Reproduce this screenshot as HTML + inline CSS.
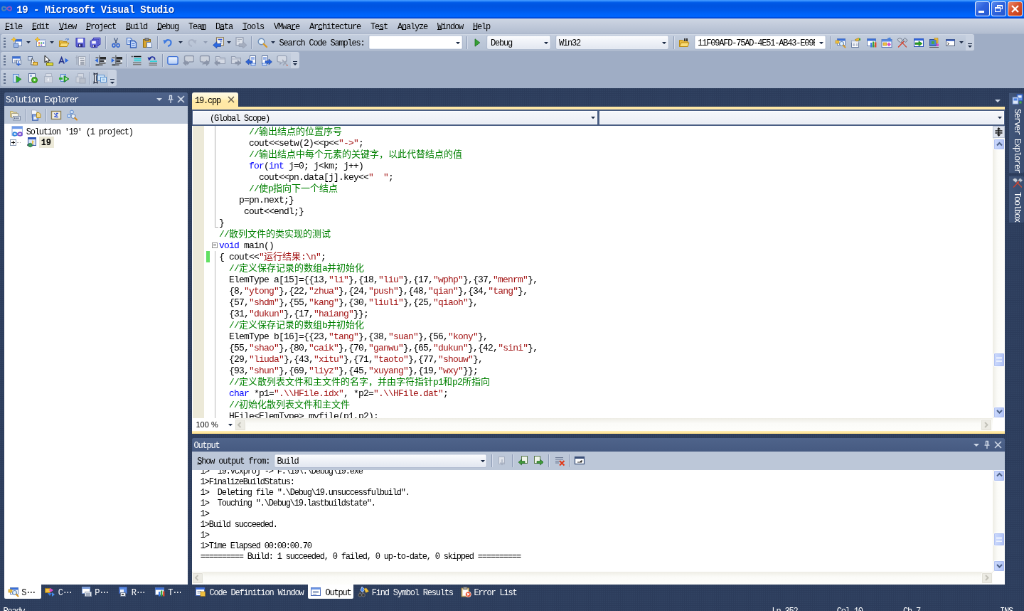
<!DOCTYPE html><html><head><meta charset="utf-8"><title>19 - Microsoft Visual Studio</title><style>
html,body{margin:0;padding:0;}
body{width:1024px;height:611px;overflow:hidden;background:#2c3c5b;position:relative;}
#root{position:absolute;left:0;top:0;width:1440px;height:864px;background-image:radial-gradient(circle at 1px 1px,#324464 0.6px,transparent 1px);background-size:3px 3px;transform:scale(0.7111111);transform-origin:0 0;overflow:hidden;background-color:#2c3c5b;will-change:transform;}
#root div,#root svg{position:absolute;box-sizing:border-box;}
#root span{position:static;}
.u{font-family:"Liberation Mono","Noto Sans CJK SC",monospace;font-size:12px;letter-spacing:-1.2px;white-space:pre;color:#000;}
.w{color:#fff;}
.k{font-family:"Liberation Mono","Noto Sans CJK SC",monospace;font-size:13px;letter-spacing:-0.8px;white-space:pre;color:#000;}
.k .c{font-size:13px;letter-spacing:0;line-height:0;}
.u .c{font-size:12px;letter-spacing:0;line-height:0;}
.g{color:#008000;}.b{color:#0000ff;}.r{color:#a31515;}
.tt{font-family:"Liberation Mono",monospace;font-weight:bold;font-size:14px;letter-spacing:-0.5px;white-space:pre;color:#fff;text-shadow:1px 1px 0 rgba(0,30,120,.75);}
.sans{font-family:"Liberation Sans",sans-serif;font-size:11px;white-space:pre;color:#000;}
u{text-decoration:underline;text-underline-offset:0.3px;text-decoration-thickness:1px;}
</style></head><body><div id="root">
<div style="left:0px;top:0px;width:1440px;height:25.8px;background:linear-gradient(to bottom,#3f97ff 0%,#3a92fc 5%,#0c6af0 10%,#0059e6 15%,#0054e0 32%,#0058e8 52%,#0063f8 75%,#0066ff 90%,#0050e2 94%,#003cc8 100%);"></div>
<svg style="left:1.3px;top:6.3px;" width="17" height="12" viewBox="0 0 17 12"><path d="M8.5 6C6 2.5 2 2.5 2 6C2 9.5 6 9.5 8.5 6" fill="none" stroke="#4f86b4" stroke-width="2"/><path d="M8.5 6C11 9.5 15 9.5 15 6C15 2.5 11 2.5 8.5 6" fill="none" stroke="#8a55c0" stroke-width="2"/></svg>
<div class="tt" style="left:23.3px;top:4.6px;height:18px;line-height:18px;">19 - Microsoft Visual Studio</div>
<div style="left:1371px;top:1.6px;width:21px;height:21px;background:linear-gradient(135deg,#5a8cf0 0%,#2f63dd 45%,#2458d2 100%);border:1px solid rgba(255,255,255,.88);border-radius:3px;"><div style="left:4px;top:12px;width:8px;height:3px;background:#fff"></div></div>
<div style="left:1394px;top:1.6px;width:21px;height:21px;background:linear-gradient(135deg,#5a8cf0 0%,#2f63dd 45%,#2458d2 100%);border:1px solid rgba(255,255,255,.88);border-radius:3px;"><div style="left:7px;top:4px;width:7.5px;height:6.5px;border:1.3px solid #fff;border-top-width:2.2px"></div><div style="left:4px;top:7.5px;width:7.5px;height:6.5px;border:1.3px solid #fff;border-top-width:2.2px;background:#2f63dd"></div></div>
<div style="left:1417px;top:1.6px;width:21px;height:21px;background:linear-gradient(135deg,#ea8a6c 0%,#d7532e 45%,#c23a14 100%);border:1px solid rgba(255,255,255,.88);border-radius:3px;"><svg style="left:3px;top:3px" width="13" height="13" viewBox="0 0 13 13"><path d="M2 2L11 11M11 2L2 11" stroke="#fff" stroke-width="2.2"/></svg></div>
<div style="left:0px;top:25.8px;width:1440px;height:21.9px;background:linear-gradient(to bottom,#d3d9e6 0%,#cbd3e1 10%,#b3bed1 92%,#a9b4c9 100%);"></div>
<div class="u" style="left:7px;top:30.4px;height:16px;line-height:16px;"><u>F</u>ile</div>
<div class="u" style="left:45px;top:30.4px;height:16px;line-height:16px;"><u>E</u>dit</div>
<div class="u" style="left:83px;top:30.4px;height:16px;line-height:16px;"><u>V</u>iew</div>
<div class="u" style="left:121px;top:30.4px;height:16px;line-height:16px;"><u>P</u>roject</div>
<div class="u" style="left:177px;top:30.4px;height:16px;line-height:16px;"><u>B</u>uild</div>
<div class="u" style="left:221px;top:30.4px;height:16px;line-height:16px;"><u>D</u>ebug</div>
<div class="u" style="left:265px;top:30.4px;height:16px;line-height:16px;">Tea<u>m</u></div>
<div class="u" style="left:303px;top:30.4px;height:16px;line-height:16px;">D<u>a</u>ta</div>
<div class="u" style="left:341px;top:30.4px;height:16px;line-height:16px;"><u>T</u>ools</div>
<div class="u" style="left:385px;top:30.4px;height:16px;line-height:16px;">VMwa<u>r</u>e</div>
<div class="u" style="left:435px;top:30.4px;height:16px;line-height:16px;">Ar<u>c</u>hitecture</div>
<div class="u" style="left:521px;top:30.4px;height:16px;line-height:16px;">Te<u>s</u>t</div>
<div class="u" style="left:559px;top:30.4px;height:16px;line-height:16px;">A<u>n</u>alyze</div>
<div class="u" style="left:615px;top:30.4px;height:16px;line-height:16px;"><u>W</u>indow</div>
<div class="u" style="left:665px;top:30.4px;height:16px;line-height:16px;"><u>H</u>elp</div>
<div style="left:0px;top:47.7px;width:1440px;height:76.3px;background:#9fadc5;"></div>
<div style="left:1.4px;top:47.8px;width:1368.5px;height:24px;background:linear-gradient(to bottom,#c4cede 0%,#bcc7d8 50%,#b5c1d4 100%);border-radius:3px;border-top:1px solid #cfd7e4;border-bottom:1px solid #a9b5ca;"></div><div style="left:5.4px;top:52.8px;width:2.6px;height:2.2px;background:#62728f;"></div><div style="left:5.4px;top:56.9px;width:2.6px;height:2.2px;background:#62728f;"></div><div style="left:5.4px;top:61px;width:2.6px;height:2.2px;background:#62728f;"></div><div style="left:5.4px;top:65.1px;width:2.6px;height:2.2px;background:#62728f;"></div>
<div style="left:1.4px;top:72.9px;width:419.3px;height:24px;background:linear-gradient(to bottom,#c4cede 0%,#bcc7d8 50%,#b5c1d4 100%);border-radius:3px;border-top:1px solid #cfd7e4;border-bottom:1px solid #a9b5ca;"></div><div style="left:5.4px;top:77.9px;width:2.6px;height:2.2px;background:#62728f;"></div><div style="left:5.4px;top:82px;width:2.6px;height:2.2px;background:#62728f;"></div><div style="left:5.4px;top:86.1px;width:2.6px;height:2.2px;background:#62728f;"></div><div style="left:5.4px;top:90.2px;width:2.6px;height:2.2px;background:#62728f;"></div>
<div style="left:1.4px;top:98.2px;width:163px;height:24px;background:linear-gradient(to bottom,#c4cede 0%,#bcc7d8 50%,#b5c1d4 100%);border-radius:3px;border-top:1px solid #cfd7e4;border-bottom:1px solid #a9b5ca;"></div><div style="left:5.4px;top:103.2px;width:2.6px;height:2.2px;background:#62728f;"></div><div style="left:5.4px;top:107.3px;width:2.6px;height:2.2px;background:#62728f;"></div><div style="left:5.4px;top:111.4px;width:2.6px;height:2.2px;background:#62728f;"></div><div style="left:5.4px;top:115.5px;width:2.6px;height:2.2px;background:#62728f;"></div>
<svg style="left:16px;top:51.5px;" width="16" height="16" viewBox="0 0 16 16"><rect x="5.5" y="3.5" width="9" height="9" fill="#fff" stroke="#6d86b5" stroke-width="1"/><rect x="5.5" y="3.5" width="9" height="3" fill="#3b6fd6"/><rect x="3.5" y="9" width="6" height="5.5" fill="#9db8e8" stroke="#5878b0"/><path d="M3.5 0L4.5 2.5L7 3.5L4.5 4.5L3.5 7L2.5 4.5L0 3.5L2.5 2.5Z" fill="#f5c52c" stroke="#d99a0a" stroke-width=".5"/></svg>
<svg style="left:48.5px;top:51.5px;" width="16" height="16" viewBox="0 0 16 16"><rect x="2.5" y="3.5" width="12" height="10" fill="#fff" stroke="#7f93b8"/><rect x="2.5" y="3.5" width="12" height="2.5" fill="#c9d6ee"/><rect x="5" y="7.5" width="2" height="2" fill="#e0462c"/><rect x="8.2" y="7.5" width="2" height="2" fill="#2f9e3b"/><rect x="11.2" y="7.5" width="2" height="2" fill="#2e62d8"/><rect x="5" y="10.5" width="2" height="2" fill="#eab41c"/><rect x="8.2" y="10.5" width="2" height="2" fill="#8a4fc9"/><path d="M3.5 0L4.5 2.5L7 3.5L4.5 4.5L3.5 7L2.5 4.5L0 3.5L2.5 2.5Z" fill="#f5c52c" stroke="#d99a0a" stroke-width=".5"/></svg>
<svg style="left:82px;top:51.5px;" width="16" height="16" viewBox="0 0 16 16"><path d="M1.5 5.5L1.5 13.5L12 13.5L12 6.5L7 6.5L6 5.5Z" fill="#e9b93c" stroke="#b98a14"/><path d="M1.5 13.5L4 8.5L15 8.5L12 13.5Z" fill="#f8dc78" stroke="#b98a14"/><path d="M10 3.5C11.5 2 13.5 2.5 14 4M14 4L14.3 2M14 4L12.2 4.2" fill="none" stroke="#4a78c8" stroke-width="1"/></svg>
<svg style="left:104.5px;top:51.5px;" width="16" height="16" viewBox="0 0 16 16"><path d="M2 1.8L14 1.8L14 14L3.3 14L2 12.7Z" fill="#676ce0" stroke="#3a3eb4" stroke-width="1.1"/><rect x="4.3" y="2.3" width="7.6" height="5.6" fill="#f6f6fd"/><rect x="4.8" y="9.6" width="6.4" height="4.4" fill="#2d2f7a"/><rect x="6" y="10.4" width="2" height="2.8" fill="#e8e8f8"/></svg>
<svg style="left:126px;top:51.5px;" width="16" height="16" viewBox="0 0 16 16"><path d="M5.5 1.2L15 1.2L15 10.5L5.5 10.5Z" fill="#8a8ee8" stroke="#3a3eb4"/><path d="M3.5 3.2L13 3.2L13 12.5L3.5 12.5Z" fill="#777be4" stroke="#3a3eb4"/><path d="M1.2 5.2L10.8 5.2L10.8 14.8L2.4 14.8L1.2 13.6Z" fill="#676ce0" stroke="#3a3eb4"/><rect x="3.2" y="5.7" width="5.6" height="3.8" fill="#f6f6fd"/><rect x="3.8" y="11" width="4.6" height="3.4" fill="#2d2f7a"/><rect x="4.6" y="11.6" width="1.4" height="2.2" fill="#e8e8f8"/></svg>
<svg style="left:154.7px;top:51.5px;" width="16" height="16" viewBox="0 0 16 16"><path d="M5.5 1.5L9 9M10.5 1.5L7 9" stroke="#44597e" stroke-width="1.3" fill="none"/><ellipse cx="5" cy="11.8" rx="2" ry="2.4" fill="none" stroke="#2d62d0" stroke-width="1.5"/><ellipse cx="11" cy="11.8" rx="2" ry="2.4" fill="none" stroke="#2d62d0" stroke-width="1.5"/></svg>
<svg style="left:176.5px;top:51.5px;" width="16" height="16" viewBox="0 0 16 16"><path d="M1.5 1.5L6.5 1.5L8.5 3.5L8.5 10.5L1.5 10.5Z" fill="#dce8fa" stroke="#4a74c4" stroke-width="1.2"/><path d="M3 4.5L7 4.5M3 7L7 7" stroke="#6d92d8"/><path d="M6.5 5.5L12 5.5L14.5 8L14.5 15L6.5 15Z" fill="#c4d8f8" stroke="#2f5cb8" stroke-width="1.3"/><path d="M8.5 9.5L12.5 9.5M8.5 12L12.5 12" stroke="#3f6fd0" stroke-width="1.2"/></svg>
<svg style="left:199px;top:51.5px;" width="16" height="16" viewBox="0 0 16 16"><rect x="2.5" y="3.5" width="10" height="11" fill="#d9a52e" stroke="#8f6a12"/><rect x="5" y="2" width="5" height="3" fill="#8c8c8c" stroke="#555"/><path d="M7.5 7.5L12.5 7.5L14.5 9.5L14.5 14.5L7.5 14.5Z" fill="#eef3fc" stroke="#5b78a8"/></svg>
<svg style="left:228px;top:51.5px;" width="16" height="16" viewBox="0 0 16 16"><path d="M4 7.5C6 2.5 13 3.5 12.5 8.5C12.2 11 10.5 12.5 8 13" fill="none" stroke="#3c78e0" stroke-width="2.2"/><path d="M1.5 4L7.2 5.2L3 10Z" fill="#3c78e0"/></svg>
<svg style="left:262px;top:51.5px;" width="16" height="16" viewBox="0 0 16 16"><g transform="translate(16,0) scale(-1,1)"><path d="M4 7.5C6 2.5 13 3.5 12.5 8.5C12.2 11 10.5 12.5 8 13" fill="none" stroke="#a9b3c6" stroke-width="2.2"/><path d="M1.5 4L7.2 5.2L3 10Z" fill="#a9b3c6"/></g></svg>
<svg style="left:299px;top:51.5px;" width="16" height="16" viewBox="0 0 16 16"><rect x="5.5" y="0.8" width="10" height="11" fill="#fbf8ee" stroke="#8a7a58" stroke-width="1.2"/><path d="M7.5 3.5L13.5 3.5" stroke="#2d50d8" stroke-width="1.6"/><path d="M10 6L13.5 6M10 8.5L13.5 8.5" stroke="#3768d2" stroke-width="1.2"/><path d="M0.5 11.5L6 6.5L6 9.5L11.5 9.5L11.5 13.5L6 13.5L6 16Z" fill="#2d6ae0" stroke="#1c3f9a" stroke-width=".6"/></svg>
<svg style="left:331px;top:51.5px;" width="16" height="16" viewBox="0 0 16 16"><rect x="1" y="0.8" width="10" height="11" fill="#dde2ea" stroke="#929cb0" stroke-width="1.2"/><path d="M3 3.5L9 3.5M3 6L6 6" stroke="#a0a9ba" stroke-width="1.2"/><path d="M16 11.5L10.5 6.5L10.5 9.5L5 9.5L5 13.5L10.5 13.5L10.5 16Z" fill="#a4adbe" stroke="#8b94a8" stroke-width=".6"/></svg>
<svg style="left:360.5px;top:51.5px;" width="16" height="16" viewBox="0 0 16 16"><circle cx="6.5" cy="6.5" r="4.3" fill="#e4f0fb" stroke="#6f8eb8" stroke-width="1.4"/><path d="M9.8 9.8L14 14" stroke="#d89a2a" stroke-width="2.4" stroke-linecap="round"/></svg>
<svg style="left:663px;top:51.5px;" width="16" height="16" viewBox="0 0 16 16"><path d="M5 2.8L11.8 8L5 13.2Z" fill="#35a035" stroke="#1c6e1c" stroke-width=".8"/></svg>
<svg style="left:954px;top:51.5px;" width="16" height="16" viewBox="0 0 16 16"><path d="M1.5 4.5L1.5 13.5L13 13.5L13 5.5L7 5.5L6 4.5Z" fill="#e9b93c" stroke="#b98a14"/><path d="M1.5 13.5L4 8L15 8L13 13.5Z" fill="#f8dc78" stroke="#b98a14"/><path d="M9 2L9 6M12 2L12 6" stroke="#333" stroke-width="2"/></svg>
<svg style="left:1173.5px;top:51.5px;" width="16" height="16" viewBox="0 0 16 16"><rect x="3.5" y="2.5" width="11" height="9" fill="#fff" stroke="#6d86b5" stroke-width="1"/><rect x="3.5" y="2.5" width="11" height="3" fill="#3b6fd6"/><rect x="1" y="5" width="5" height="4" fill="#f0c040" stroke="#b98a14" stroke-width=".6"/><circle cx="9.5" cy="9.5" r="3" fill="#dff0fb" stroke="#6a8ab8" stroke-width="1.2"/><path d="M11.8 11.8L14.5 14.5" stroke="#d89a2a" stroke-width="2" stroke-linecap="round"/></svg>
<svg style="left:1195.3px;top:51.5px;" width="16" height="16" viewBox="0 0 16 16"><rect x="2.5" y="5.5" width="10" height="9" fill="#fff" stroke="#6a7da0"/><rect x="2.5" y="5.5" width="10" height="2.5" fill="#dfe6f2"/><path d="M4 10L7 10M4 12L7 12M8.5 10L11 10M8.5 12L11 12" stroke="#7484a4"/><path d="M7 4L12 1.5L15 3L10 6Z" fill="#e8b838" stroke="#a87a10" stroke-width=".7"/><rect x="13" y="2" width="2" height="3" fill="#3a9a3a"/></svg>
<svg style="left:1217.7px;top:51.5px;" width="16" height="16" viewBox="0 0 16 16"><rect x="1.5" y="2.5" width="12" height="10" fill="#fff" stroke="#6d86b5" stroke-width="1"/><rect x="1.5" y="2.5" width="12" height="3" fill="#3b6fd6"/><rect x="6" y="8" width="2.4" height="6.5" fill="#3a78e0"/><rect x="9" y="6.5" width="2.4" height="8" fill="#3aa03a"/><rect x="12" y="7.5" width="2.4" height="7" fill="#e05030"/></svg>
<svg style="left:1239.3px;top:51.5px;" width="16" height="16" viewBox="0 0 16 16"><rect x="1" y="3.5" width="14" height="11" fill="#f4f7fc" stroke="#5a78b8"/><rect x="1" y="3.5" width="14" height="3" fill="#5a8ae0"/><path d="M3 8L8 8L8 12L3 12Z" fill="#f0c040" stroke="#b58a18" stroke-width=".6"/><path d="M11 7.5L14 10.5L11 13.5L8.5 10.5Z" fill="#d850c8"/><path d="M8.5 2L13 0.5L14.5 5L11.5 5.5Z" fill="#4a80d8"/></svg>
<svg style="left:1261.3px;top:51.5px;" width="16" height="16" viewBox="0 0 16 16"><path d="M2.5 14L9.5 6.8" stroke="#d6402c" stroke-width="1.4" stroke-linecap="round"/><path d="M13.5 14L6.5 6.8" stroke="#c8503c" stroke-width="1.3" stroke-linecap="round"/><path d="M8.3 4.8L11.5 1.3L15.2 4.6L12.8 7.4Z" fill="#bcc4d0" stroke="#5f6b80" stroke-width=".8"/><path d="M1.2 3.2Q4 0.3 6.8 2.5L8 5.6L5.5 7.8L2.3 5.8Z" fill="#c9d0da" stroke="#5f6b80" stroke-width=".8"/></svg>
<svg style="left:1284px;top:51.5px;" width="16" height="16" viewBox="0 0 16 16"><rect x="1.5" y="2.5" width="13" height="11" fill="#fff" stroke="#2f55b8"/><rect x="1.5" y="2.5" width="13" height="2.5" fill="#2f62d8"/><path d="M3 8L8 8L8 5.8L13 9.3L8 12.8L8 10.6L3 10.6Z" fill="#25a225" stroke="#126812" stroke-width=".6"/></svg>
<svg style="left:1306px;top:51.5px;" width="16" height="16" viewBox="0 0 16 16"><rect x="1.5" y="3.5" width="9" height="9" fill="#4a82d8" stroke="#2a4f98"/><rect x="4" y="6" width="4" height="4" fill="#48a848"/><path d="M8 1.5L13 1.5L13 8.5L10.5 8.5L10.5 4L8 4Z" fill="#f0c040" stroke="#a87a10" stroke-width=".6"/><rect x="10.5" y="9.5" width="3.5" height="3.5" fill="#d850c8"/><path d="M1 14.5L14 14.5" stroke="#555"/></svg>
<svg style="left:1327.5px;top:51.5px;" width="16" height="16" viewBox="0 0 16 16"><rect x="2.5" y="3.5" width="12" height="9" fill="#fff" stroke="#53627f"/><rect x="2.5" y="3.5" width="12" height="2.2" fill="#2f55b8"/><path d="M4.5 8L6.5 9.5L4.5 11" fill="none" stroke="#222" stroke-width="1"/></svg>
<svg style="left:36.5px;top:58.4px;" width="6" height="3.2" viewBox="0 0 6 3.2"><path d="M0 0L6 0L3 3.2Z" fill="#1b2a45"/></svg>
<svg style="left:70px;top:58.4px;" width="6" height="3.2" viewBox="0 0 6 3.2"><path d="M0 0L6 0L3 3.2Z" fill="#1b2a45"/></svg>
<svg style="left:251px;top:58.4px;" width="6" height="3.2" viewBox="0 0 6 3.2"><path d="M0 0L6 0L3 3.2Z" fill="#1b2a45"/></svg>
<svg style="left:381px;top:58.4px;" width="6" height="3.2" viewBox="0 0 6 3.2"><path d="M0 0L6 0L3 3.2Z" fill="#1b2a45"/></svg>
<svg style="left:1349px;top:58.4px;" width="6" height="3.2" viewBox="0 0 6 3.2"><path d="M0 0L6 0L3 3.2Z" fill="#1b2a45"/></svg>
<svg style="left:286px;top:58.4px;" width="6" height="3.2" viewBox="0 0 6 3.2"><path d="M0 0L6 0L3 3.2Z" fill="#8e9ab0"/></svg>
<svg style="left:319px;top:58.4px;" width="6" height="3.2" viewBox="0 0 6 3.2"><path d="M0 0L6 0L3 3.2Z" fill="#1b2a45"/></svg>
<div style="left:148px;top:50.8px;width:1px;height:18px;background:#8d9bb5;"></div><div style="left:149px;top:50.8px;width:1px;height:18px;background:#d5dcea;"></div>
<div style="left:221px;top:50.8px;width:1px;height:18px;background:#8d9bb5;"></div><div style="left:222px;top:50.8px;width:1px;height:18px;background:#d5dcea;"></div>
<div style="left:353px;top:50.8px;width:1px;height:18px;background:#8d9bb5;"></div><div style="left:354px;top:50.8px;width:1px;height:18px;background:#d5dcea;"></div>
<div style="left:655.8px;top:50.8px;width:1px;height:18px;background:#8d9bb5;"></div><div style="left:656.8px;top:50.8px;width:1px;height:18px;background:#d5dcea;"></div>
<div style="left:946.8px;top:50.8px;width:1px;height:18px;background:#8d9bb5;"></div><div style="left:947.8px;top:50.8px;width:1px;height:18px;background:#d5dcea;"></div>
<div style="left:1167.3px;top:50.8px;width:1px;height:18px;background:#8d9bb5;"></div><div style="left:1168.3px;top:50.8px;width:1px;height:18px;background:#d5dcea;"></div>
<div class="u" style="left:392.5px;top:52.7px;height:16px;line-height:16px;">Search Code Samples:</div>
<div style="left:519.3px;top:50px;width:130.5px;height:19.4px;background:#fff;border:1px solid #e4e9f2;border-radius:1.5px;box-shadow:0 0 0 .6px #a7b3c9;"></div><svg style="left:640.8px;top:58.7px;" width="6" height="3.2" viewBox="0 0 6 3.2"><path d="M0 0L6 0L3 3.2Z" fill="#1b2a45"/></svg>
<div style="left:685.4px;top:50px;width:88.7px;height:19.4px;background:linear-gradient(to bottom,#fafbfd 0%,#eef1f7 50%,#e3e8f1 100%);border:1px solid #e4e9f2;border-radius:1.5px;box-shadow:0 0 0 .6px #a7b3c9;"></div><div class="u" style="left:689.9px;top:53px;height:16px;line-height:16px;">Debug</div><svg style="left:765.1px;top:58.7px;" width="6" height="3.2" viewBox="0 0 6 3.2"><path d="M0 0L6 0L3 3.2Z" fill="#1b2a45"/></svg>
<div style="left:781.5px;top:50px;width:158.7px;height:19.4px;background:linear-gradient(to bottom,#fafbfd 0%,#eef1f7 50%,#e3e8f1 100%);border:1px solid #e4e9f2;border-radius:1.5px;box-shadow:0 0 0 .6px #a7b3c9;"></div><div class="u" style="left:786px;top:53px;height:16px;line-height:16px;">Win32</div><svg style="left:931.2px;top:58.7px;" width="6" height="3.2" viewBox="0 0 6 3.2"><path d="M0 0L6 0L3 3.2Z" fill="#1b2a45"/></svg>
<div style="left:976.8px;top:50px;width:184.2px;height:19.4px;background:#fff;border:1px solid #e4e9f2;border-radius:1.5px;box-shadow:0 0 0 .6px #a7b3c9;"></div><div class="u" style="left:981.3px;top:53px;height:16px;line-height:16px;width:165px;overflow:hidden;">11F09AFD-75AD-4E51-AB43-E09E</div><svg style="left:1152px;top:58.7px;" width="6" height="3.2" viewBox="0 0 6 3.2"><path d="M0 0L6 0L3 3.2Z" fill="#1b2a45"/></svg>
<div style="left:1357.9px;top:48.8px;width:12px;height:22px;background:#c9d2e1;border-radius:0 3px 3px 0;"></div><div style="left:1360.9px;top:60.8px;width:6px;height:1.3px;background:#1b2a45;"></div><svg style="left:1360.9px;top:64.3px;" width="6" height="3" viewBox="0 0 6 3"><path d="M0 0L6 0L3 3Z" fill="#1b2a45"/></svg>
<svg style="left:16px;top:76.6px;" width="16" height="16" viewBox="0 0 16 16"><rect x="1.5" y="2.5" width="11" height="9" fill="#fff" stroke="#6d86b5" stroke-width="1"/><rect x="1.5" y="2.5" width="11" height="3" fill="#3b6fd6"/><path d="M3.5 8L8 8M3.5 10L7 10" stroke="#6a7da0"/><rect x="7.5" y="7.5" width="6" height="6" fill="#e8eef8" stroke="#6a7da0"/><path d="M10 9L10 14M8 12.5L10 15L12 12.5" stroke="#2d64d8" stroke-width="1.3" fill="none"/></svg>
<svg style="left:38px;top:76.6px;" width="16" height="16" viewBox="0 0 16 16"><rect x="1.5" y="2.5" width="6" height="5" fill="#cfdcf2" stroke="#6a7da0"/><path d="M7 5L11 11L8.6 11L8.6 14L5.6 14Z" fill="#fff" stroke="#333" stroke-width=".8"/><rect x="8.5" y="10.5" width="6" height="4" fill="#f0c85a" stroke="#a87a10"/></svg>
<svg style="left:60px;top:76.6px;" width="16" height="16" viewBox="0 0 16 16"><path d="M3 1L3 11L5.5 8.8L7.3 12.6L8.9 11.8L7.2 8.2L10.4 8.2Z" fill="#fff" stroke="#111" stroke-width="1"/><rect x="5.5" y="11.5" width="9" height="3.5" fill="#e8e23a" stroke="#77740c"/></svg>
<svg style="left:82px;top:76.6px;" width="16" height="16" viewBox="0 0 16 16"><path d="M1 12.5L4.6 4L8.2 12.5M2.4 9.6L6.8 9.6" fill="none" stroke="#27348a" stroke-width="1.7"/><path d="M9.5 4.8L14.6 8L9.5 11.2Z" fill="#2d6ae0"/></svg>
<svg style="left:104.5px;top:76.6px;" width="16" height="16" viewBox="0 0 16 16"><path d="M3 1L3 14" stroke="#9aa2b2" stroke-width="1.1"/><path d="M1 4L5 4" stroke="#9aa2b2"/><rect x="5.5" y="2.5" width="9.5" height="12.5" fill="#eceff4" stroke="#a2aab9"/><path d="M7 5L13 5" stroke="#8c94a4" stroke-width="1.2"/><path d="M8 8L13.5 8M8 10.5L13.5 10.5M8 13L13.5 13" stroke="#7d8594" stroke-width="1.5"/></svg>
<svg style="left:133.3px;top:76.6px;" width="16" height="16" viewBox="0 0 16 16"><path d="M6.9 0.5L6.9 15.5" stroke="#333" stroke-width=".9"/><rect x="7.5" y="3" width="8.5" height="3.6" fill="#2a2a2a"/><rect x="7.5" y="8" width="6" height="1.8" fill="#1a1a1a"/><rect x="13.5" y="8" width="2.5" height="1.8" fill="#fff"/><rect x="7.5" y="11" width="8" height="1.8" fill="#666"/><rect x="1.5" y="13.5" width="4.5" height="1.6" fill="#222"/><rect x="7.5" y="13.6" width="4" height="1.4" fill="#444"/><rect x="1.5" y="3.5" width="4" height="1.4" fill="#555"/><path d="M0.3 8L4.8 5L4.8 11Z" fill="#2d6ae0"/></svg>
<svg style="left:155.7px;top:76.6px;" width="16" height="16" viewBox="0 0 16 16"><path d="M6.9 0.5L6.9 15.5" stroke="#333" stroke-width=".9"/><rect x="7.5" y="3" width="8.5" height="3.6" fill="#2a2a2a"/><rect x="7.5" y="8" width="6" height="1.8" fill="#1a1a1a"/><rect x="13.5" y="8" width="2.5" height="1.8" fill="#fff"/><rect x="7.5" y="11" width="8" height="1.8" fill="#666"/><rect x="1.5" y="13.5" width="4.5" height="1.6" fill="#222"/><rect x="7.5" y="13.6" width="4" height="1.4" fill="#444"/><rect x="1.5" y="3.5" width="4" height="1.4" fill="#555"/><path d="M5.2 8L0.7 5L0.7 11Z" fill="#2d6ae0"/></svg>
<svg style="left:184.3px;top:76.6px;" width="16" height="16" viewBox="0 0 16 16"><path d="M1 2.5L2.5 2.5M4 2.5L14.5 2.5" stroke="#111" stroke-width="1.3"/><path d="M4.5 5.6L14.5 5.6M4.5 8.4L14.5 8.4" stroke="#30d0d8" stroke-width="1.7"/><path d="M3 11.2L14.5 11.2M3 13.8L14.5 13.8" stroke="#777" stroke-width="1.5"/></svg>
<svg style="left:206.3px;top:76.6px;" width="16" height="16" viewBox="0 0 16 16"><path d="M4.5 6.5C5 1.5 12.5 2 11.5 7" fill="none" stroke="#1c2c9c" stroke-width="1.7"/><path d="M1.5 3.5L7 4.5L3.5 8.5Z" fill="#1c2c9c"/><path d="M5 9.2L15 9.2" stroke="#30d0d8" stroke-width="1.7"/><path d="M3.5 12L15 12M3.5 14.6L15 14.6" stroke="#777" stroke-width="1.5"/></svg>
<svg style="left:235px;top:76.6px;" width="16" height="16" viewBox="0 0 16 16"><defs><linearGradient id="bmg" x1="0" y1="0" x2="0" y2="1"><stop offset="0" stop-color="#f2f7ff"/><stop offset="1" stop-color="#b4ccf4"/></linearGradient></defs><rect x="0.9" y="2.6" width="14.2" height="10.8" rx="2" fill="url(#bmg)" stroke="#3b6fd6" stroke-width="1.4"/></svg>
<svg style="left:257.3px;top:76.6px;" width="16" height="16" viewBox="0 0 16 16"><path d="M4.5 1.5L13.5 1.5Q15.5 1.5 15.5 3.5L15.5 8Q15.5 10 13.5 10L9.5 10L6.5 13L6.5 10L4.5 10Q2.5 10 2.5 8L2.5 3.5Q2.5 1.5 4.5 1.5Z" fill="#ccd2dc" stroke="#8e98ac" stroke-width="1.4"/><path d="M0 11.5L5 7L5 9.7L8.5 9.7L8.5 13.3L5 13.3L5 16Z" fill="#8b95a9"/></svg>
<svg style="left:279px;top:76.6px;" width="16" height="16" viewBox="0 0 16 16"><path d="M4.5 1.5L13.5 1.5Q15.5 1.5 15.5 3.5L15.5 8Q15.5 10 13.5 10L9.5 10L6.5 13L6.5 10L4.5 10Q2.5 10 2.5 8L2.5 3.5Q2.5 1.5 4.5 1.5Z" fill="#ccd2dc" stroke="#8e98ac" stroke-width="1.4"/><path d="M16 11.5L11 7L11 9.7L7.5 9.7L7.5 13.3L11 13.3L11 16Z" fill="#8b95a9"/></svg>
<svg style="left:301.3px;top:76.6px;" width="16" height="16" viewBox="0 0 16 16"><path d="M2.5 2.5L2.5 12.5L15.5 12.5L15.5 4.5L9 4.5L7.5 2.5Z" fill="#d3d9e4" stroke="#949eb2" stroke-width="1.2"/><path d="M2.5 6L15.5 6" stroke="#aab3c4"/><path d="M0 11.5L5 7L5 9.7L8.5 9.7L8.5 13.3L5 13.3L5 16Z" fill="#8b95a9"/></svg>
<svg style="left:323.4px;top:76.6px;" width="16" height="16" viewBox="0 0 16 16"><path d="M2.5 2.5L2.5 12.5L15.5 12.5L15.5 4.5L9 4.5L7.5 2.5Z" fill="#d3d9e4" stroke="#949eb2" stroke-width="1.2"/><path d="M2.5 6L15.5 6" stroke="#aab3c4"/><path d="M16 11.5L11 7L11 9.7L7.5 9.7L7.5 13.3L11 13.3L11 16Z" fill="#8b95a9"/></svg>
<svg style="left:344.6px;top:76.6px;" width="16" height="16" viewBox="0 0 16 16"><rect x="6.5" y="1.5" width="8" height="11" fill="#fff" stroke="#58709c"/><path d="M8 4L13 4M8 6L13 6" stroke="#3768d2"/><path d="M0.5 10L5 6L5 8.5L10 8.5L10 11.5L5 11.5L5 14Z" fill="#2d64d8" stroke="#1c3f9a" stroke-width=".6"/><rect x="8" y="12" width="6" height="3" fill="#dbe8fb" stroke="#3b6fd6" stroke-width=".8"/></svg>
<svg style="left:366.6px;top:76.6px;" width="16" height="16" viewBox="0 0 16 16"><rect x="1.5" y="1.5" width="8" height="11" fill="#fff" stroke="#58709c"/><path d="M3 4L8 4M3 6L8 6" stroke="#3768d2"/><path d="M15.5 10L11 6L11 8.5L6 8.5L6 11.5L11 11.5L11 14Z" fill="#2d64d8" stroke="#1c3f9a" stroke-width=".6"/><rect x="2" y="12" width="6" height="3" fill="#dbe8fb" stroke="#3b6fd6" stroke-width=".8"/></svg>
<svg style="left:389.3px;top:76.6px;" width="16" height="16" viewBox="0 0 16 16"><path d="M3 1.5L12 1.5Q14 1.5 14 3.5L14 8Q14 10 12 10L8 10L5 13L5 10L3 10Q1 10 1 8L1 3.5Q1 1.5 3 1.5Z" fill="#d3d9e4" stroke="#949eb2" stroke-width="1.2"/><path d="M8 7L15 15M14 8L9 15" stroke="#9ea6b6" stroke-width="1.6"/><circle cx="14.8" cy="14.8" r=".9" fill="#d86040"/></svg>
<div style="left:125.9px;top:75.9px;width:1px;height:18px;background:#8d9bb5;"></div><div style="left:126.9px;top:75.9px;width:1px;height:18px;background:#d5dcea;"></div>
<div style="left:177.5px;top:75.9px;width:1px;height:18px;background:#8d9bb5;"></div><div style="left:178.5px;top:75.9px;width:1px;height:18px;background:#d5dcea;"></div>
<div style="left:228px;top:75.9px;width:1px;height:18px;background:#8d9bb5;"></div><div style="left:229px;top:75.9px;width:1px;height:18px;background:#d5dcea;"></div>
<div style="left:408.7px;top:73.9px;width:12px;height:22px;background:#c9d2e1;border-radius:0 3px 3px 0;"></div><div style="left:411.7px;top:85.9px;width:6px;height:1.3px;background:#1b2a45;"></div><svg style="left:411.7px;top:89.4px;" width="6" height="3" viewBox="0 0 6 3"><path d="M0 0L6 0L3 3Z" fill="#1b2a45"/></svg>
<svg style="left:15.5px;top:101.9px;" width="16" height="16" viewBox="0 0 16 16"><rect x="2.5" y="2.5" width="8" height="11" fill="#cfe0f6" stroke="#5a8ad0"/><path d="M7 5L14 9.5L7 14Z" fill="#2fae2f" stroke="#167a16" stroke-width=".7"/></svg>
<svg style="left:37.5px;top:101.9px;" width="16" height="16" viewBox="0 0 16 16"><rect x="2.5" y="1.5" width="9" height="12" fill="#eef2f9" stroke="#5a6f98"/><rect x="4" y="3" width="3" height="3" fill="#9ab4e0"/><circle cx="10.5" cy="10.5" r="4" fill="#4cb82c" stroke="#2a7a14"/><circle cx="10.5" cy="10.5" r="1.4" fill="#dff5d5"/></svg>
<svg style="left:59.5px;top:101.9px;" width="16" height="16" viewBox="0 0 16 16"><rect x="4.5" y="1.5" width="8" height="9" fill="#d9dee8" stroke="#aab3c4"/><rect x="2.5" y="5.5" width="11" height="9" fill="#cfd5e0" stroke="#aab3c4"/><path d="M6 10L9 7.5L9 12.5Z" fill="#eef1f6"/></svg>
<svg style="left:82px;top:101.9px;" width="16" height="16" viewBox="0 0 16 16"><rect x="3.5" y="2.5" width="7" height="10" fill="#cfe0f6" stroke="#5a8ad0"/><path d="M1 7L6 7L6 10L1 10Z" fill="#2fae2f"/><path d="M8 4.5L15 9L8 13.5Z" fill="#2fae2f" stroke="#167a16" stroke-width=".7"/><path d="M10 7L12.8 9L10 11Z" fill="#d8f5d0"/></svg>
<svg style="left:104.5px;top:101.9px;" width="16" height="16" viewBox="0 0 16 16"><rect x="4.5" y="1.5" width="8" height="8" fill="#d3d8e2" stroke="#a8b1c2"/><rect x="2" y="6" width="8" height="8" fill="#cfd4de" stroke="#a8b1c2"/><rect x="7" y="8" width="8" height="7" fill="#b9c0cc" stroke="#9fa8b9"/></svg>
<svg style="left:130px;top:101.9px;" width="22" height="16" viewBox="0 0 22 16"><path d="M2.2 1.2Q4.5 3 6.8 1.2L6.8 3Q5.8 4 5.8 5L5.8 11Q5.8 12 6.8 13L6.8 14.8Q4.5 13 2.2 14.8L2.2 13Q3.2 12 3.2 11L3.2 5Q3.2 4 2.2 3Z" fill="#fff" stroke="#1c2438" stroke-width="1.2"/><rect x="7.5" y="3.5" width="9" height="8" fill="#cfe3f6" stroke="#5a92d0"/><rect x="11.5" y="6.5" width="8" height="7" fill="#d8eafa" stroke="#5a92d0"/><rect x="13.5" y="8.5" width="4" height="3" fill="#9cc4ea"/></svg>
<div style="left:125.9px;top:101.2px;width:1px;height:18px;background:#8d9bb5;"></div><div style="left:126.9px;top:101.2px;width:1px;height:18px;background:#d5dcea;"></div>
<div style="left:152.4px;top:99.2px;width:12px;height:22px;background:#c9d2e1;border-radius:0 3px 3px 0;"></div><div style="left:155.4px;top:111.2px;width:6px;height:1.3px;background:#1b2a45;"></div><svg style="left:155.4px;top:114.7px;" width="6" height="3" viewBox="0 0 6 3"><path d="M0 0L6 0L3 3Z" fill="#1b2a45"/></svg>
<div style="left:5.6px;top:130px;width:258.6px;height:19px;background:linear-gradient(to bottom,#4f648b 0%,#465a81 100%);border-radius:2.5px 2.5px 0 0;"></div>
<div class="u w" style="left:8px;top:133px;height:16px;line-height:16px;">Solution Explorer</div>
<svg style="left:220.3px;top:138.1px;" width="8" height="4" viewBox="0 0 8 4"><path d="M0 0L8 0L4 4Z" fill="#ced7e6"/></svg><svg style="left:234.5px;top:133.1px;" width="10" height="13" viewBox="0 0 10 13"><path d="M3 1.5L7 1.5M3.5 1.5L3.5 7M6.5 1.5L6.5 7M1.5 7.2L8.5 7.2M5 7.5L5 12" stroke="#ced7e6" stroke-width="1.3" fill="none"/><path d="M5.9 2L5.9 7" stroke="#ced7e6" stroke-width="1"/></svg><svg style="left:249.4px;top:134.1px;" width="11" height="11" viewBox="0 0 11 11"><path d="M1 1L10 10M10 1L1 10" stroke="#ced7e6" stroke-width="1.6"/></svg>
<div style="left:5.6px;top:149px;width:258.6px;height:25.4px;background:#bcc7d8;"></div>
<div style="left:5.6px;top:174.4px;width:258.6px;height:648px;background:#fff;"></div>
<svg style="left:13.3px;top:154.2px;" width="16" height="16" viewBox="0 0 16 16"><path d="M1.5 2.5L1.5 10.5L10.5 10.5L10.5 4L6 4L5 2.5Z" fill="#f1e2a8" stroke="#b5a468"/><rect x="3.5" y="5.5" width="9" height="6" fill="#f6f3e6" stroke="#a9a48c"/><rect x="5.5" y="9.5" width="10" height="5.5" fill="#dfe5ee" stroke="#7f8da6"/><path d="M7 12.3L14 12.3" stroke="#4a5a7a" stroke-width="2" stroke-dasharray="1.4 .8"/></svg>
<svg style="left:42.2px;top:154.2px;" width="16" height="16" viewBox="0 0 16 16"><path d="M2.5 0.8L8 0.8L10.5 3.3L10.5 11.5L2.5 11.5Z" fill="#f4f6fb" stroke="#a3adbf"/><rect x="3.5" y="7" width="8" height="8.3" fill="#86a6e0" stroke="#4668b0"/><rect x="5.5" y="10" width="4" height="4" fill="#e8eefa"/><path d="M9.5 4.5L13 4.5L15 6.5L15 11.5L9.5 11.5Z" fill="#f3d88a" stroke="#b5922a"/></svg>
<svg style="left:71.2px;top:154.2px;" width="16" height="16" viewBox="0 0 16 16"><rect x="1.5" y="2.5" width="13" height="11" fill="#f6f1e0" stroke="#8c7f58" stroke-width="1.4"/><path d="M5 5.5L9 8L5 10.5M8 5.5L11 5.5M7 10.5L11 10.5" fill="none" stroke="#2d50d8" stroke-width="1.3"/></svg>
<svg style="left:93.2px;top:154.2px;" width="16" height="16" viewBox="0 0 16 16"><circle cx="4" cy="9" r="2.6" fill="#cfe0f6" stroke="#5a8ad0"/><circle cx="8" cy="3.5" r="2.4" fill="#cfe0f6" stroke="#5a8ad0"/><path d="M5.5 7L7 5.5" stroke="#5a8ad0"/><circle cx="10" cy="9.5" r="3" fill="#e8f2fb" stroke="#7890b8" stroke-width="1.2"/><path d="M12.3 11.8L15 14.5" stroke="#d88a1a" stroke-width="2" stroke-linecap="round"/></svg>
<div style="left:35.5px;top:153px;width:1px;height:18px;background:#8d9bb5;"></div><div style="left:36.5px;top:153px;width:1px;height:18px;background:#d5dcea;"></div>
<div style="left:63.8px;top:153px;width:1px;height:18px;background:#8d9bb5;"></div><div style="left:64.8px;top:153px;width:1px;height:18px;background:#d5dcea;"></div>
<svg style="left:16.3px;top:176.8px;" width="16" height="16" viewBox="0 0 16 16"><rect x="1" y="0.8" width="14.5" height="12.5" fill="#fff" stroke="#9db4e0" stroke-width="1.2"/><rect x="1" y="0.8" width="14.5" height="3.4" fill="#6f9bea"/><path d="M8.5 11.5C6.5 8.3 2.3 8.5 2.3 11.5C2.3 14.5 6.5 14.7 8.5 11.5" fill="none" stroke="#2f86e0" stroke-width="2"/><path d="M8.5 11.5C10.5 14.7 14.7 14.5 14.7 11.5C14.7 8.5 10.5 8.3 8.5 11.5" fill="none" stroke="#7a4fd0" stroke-width="2"/></svg>
<div class="u" style="left:36.8px;top:177.8px;height:16px;line-height:16px;">Solution '19' (1 project)</div>
<div style="left:14px;top:196px;width:9px;height:9px;background:#fff;border:1px solid #8b9bb5;"></div>
<div style="left:16px;top:200px;width:5px;height:1px;background:#000;"></div><div style="left:18px;top:198px;width:1px;height:5px;background:#000;"></div>
<div style="left:24px;top:200px;width:6px;height:1px;background:repeating-linear-gradient(to right,#aaa 0 1px,transparent 1px 2px);"></div>
<svg style="left:36.8px;top:192px;" width="16" height="16" viewBox="0 0 16 16"><rect x="2.5" y="1.5" width="11" height="11" fill="#dbe6f8" stroke="#3a5aa8"/><rect x="2.5" y="1.5" width="11" height="2.5" fill="#2f55b8"/><path d="M8 4.5L9 6.5L11.5 7L9.5 8.5L10 11L8 9.8Z" fill="#f0c040"/><circle cx="5.5" cy="12" r="2.8" fill="#3a9a5a" stroke="#1f6a3a" stroke-width=".6"/><path d="M1 12L2.5 10.5M1 12L2.5 13.5M10 12L8.5 10.5M10 12L8.5 13.5" stroke="#444" stroke-width=".8"/></svg>
<div style="left:54.8px;top:192.3px;width:21.2px;height:15.6px;background:#ece9d8;"></div>
<div class="u" style="left:57.8px;top:193.4px;height:16px;line-height:16px;font-weight:bold;letter-spacing:-0.2px;">19</div>
<div style="left:5.6px;top:822.3px;width:52.7px;height:19.4px;background:#fff;border-radius:0 0 2px 2px;"></div>
<svg style="left:10.7px;top:824px;" width="16" height="16" viewBox="0 0 16 16"><rect x="3.5" y="2.5" width="11" height="9" fill="#fff" stroke="#6d86b5" stroke-width="1"/><rect x="3.5" y="2.5" width="11" height="3" fill="#3b6fd6"/><rect x="1" y="5" width="5" height="4" fill="#f0c040" stroke="#b98a14" stroke-width=".6"/><circle cx="9.5" cy="9.5" r="3" fill="#dff0fb" stroke="#6a8ab8" stroke-width="1.2"/><path d="M11.8 11.8L14.5 14.5" stroke="#d89a2a" stroke-width="2" stroke-linecap="round"/></svg>
<div class="u" style="left:30.3px;top:825.5px;height:16px;line-height:16px;">S<span style="letter-spacing:-3.2px">···</span></div>
<svg style="left:62.2px;top:824px;" width="16" height="16" viewBox="0 0 16 16"><rect x="1.5" y="3.5" width="7" height="6" fill="#f0c040" stroke="#a87a10" stroke-width=".7"/><path d="M9 3L13 6L9 9L7 6Z" fill="#d850c8"/><path d="M5 10L11 10L8 14Z" fill="#3a78e0"/><path d="M11 9L15 12L11 15Z" fill="#4a90e8"/></svg>
<div class="u w" style="left:81.8px;top:825.5px;height:16px;line-height:16px;">C<span style="letter-spacing:-3.2px">···</span></div>
<svg style="left:113.7px;top:824px;" width="16" height="16" viewBox="0 0 16 16"><rect x="1.5" y="1.5" width="11" height="9" fill="#fff" stroke="#7d9ad2"/><rect x="1.5" y="1.5" width="11" height="2.5" fill="#7fa0dc"/><rect x="5.5" y="8.5" width="9" height="6" fill="#e9edf3" stroke="#8d99ad"/><path d="M7 11L13 11M7 13L13 13" stroke="#5a6a88" stroke-width="1"/></svg>
<div class="u w" style="left:133.3px;top:825.5px;height:16px;line-height:16px;">P<span style="letter-spacing:-3.2px">···</span></div>
<svg style="left:165.2px;top:824px;" width="16" height="16" viewBox="0 0 16 16"><rect x="2.5" y="1.5" width="11" height="9" fill="#5a8ae0" stroke="#3a5aa8"/><rect x="4" y="5" width="5" height="4" fill="#e8eefa"/><rect x="4.5" y="9.5" width="7" height="5" fill="#e9edf3" stroke="#6d7990"/><rect x="6" y="11" width="3" height="2" fill="#555"/></svg>
<div class="u w" style="left:184.8px;top:825.5px;height:16px;line-height:16px;">R<span style="letter-spacing:-3.2px">···</span></div>
<svg style="left:216.7px;top:824px;" width="16" height="16" viewBox="0 0 16 16"><rect x="1.5" y="2.5" width="12" height="10" fill="#fff" stroke="#6d86b5" stroke-width="1"/><rect x="1.5" y="2.5" width="12" height="3" fill="#3b6fd6"/><rect x="6" y="8" width="2.4" height="6.5" fill="#3a78e0"/><rect x="9" y="6.5" width="2.4" height="8" fill="#3aa03a"/><rect x="12" y="7.5" width="2.4" height="7" fill="#e05030"/></svg>
<div class="u w" style="left:236.3px;top:825.5px;height:16px;line-height:16px;">T<span style="letter-spacing:-3.2px">···</span></div>
<div style="left:269.8px;top:129.6px;width:65px;height:21px;background:linear-gradient(to bottom,#fffbe8 0%,#fff3c4 45%,#ffe9a6 55%,#ffe8a6 100%);border-radius:3px 3px 0 0;"></div>
<div class="u" style="left:274px;top:133.5px;height:16px;line-height:16px;">19.cpp</div>
<svg style="left:319.8px;top:135.3px;" width="10" height="10" viewBox="0 0 10 10"><path d="M1 1L9 9M9 1L1 9" stroke="#5f574a" stroke-width="1.4"/></svg>
<svg style="left:1398.8px;top:139.5px;" width="8" height="4" viewBox="0 0 8 4"><path d="M0 0L8 0L4 4Z" fill="#ced7e6"/></svg>
<div style="left:269.8px;top:150px;width:1143px;height:3.8px;background:#ffe8a6;"></div>
<div style="left:269.8px;top:153.7px;width:1143px;height:23.5px;background:#4a5e84;"></div>
<div style="left:271.2px;top:155.9px;width:569.3px;height:19.3px;background:linear-gradient(to bottom,#f4f6fa 0%,#eff1f7 60%,#e9edf4 100%);border:1.4px solid #fff;"></div>
<div style="left:843.2px;top:155.9px;width:568.8px;height:19.3px;background:linear-gradient(to bottom,#f4f6fa 0%,#eff1f7 60%,#e9edf4 100%);border:1.4px solid #fff;"></div>
<div class="u" style="left:295px;top:159px;height:16px;line-height:16px;">(Global Scope)</div>
<svg style="left:830.5px;top:164.4px;" width="6" height="3.2" viewBox="0 0 6 3.2"><path d="M0 0L6 0L3 3.2Z" fill="#1b2a45"/></svg>
<svg style="left:1403px;top:164.4px;" width="6" height="3.2" viewBox="0 0 6 3.2"><path d="M0 0L6 0L3 3.2Z" fill="#1b2a45"/></svg>
<div style="left:269.8px;top:176.5px;width:1143px;height:411.1px;background:#fff;overflow:hidden;"></div>
<div style="left:270.6px;top:176.5px;width:16.4px;height:411.1px;background:#ece9d8;"></div>
<div style="left:301.6px;top:176.5px;width:1px;height:143px;background:#b0b0b0;"></div>
<div style="left:301.6px;top:318.5px;width:5px;height:1px;background:#b0b0b0;"></div>
<div style="left:301.6px;top:352.5px;width:1px;height:235.1px;background:#b8b8b8;"></div>
<div style="left:297.6px;top:340.5px;width:8.8px;height:8.8px;background:#fff;border:1px solid #8c8c8c;"></div>
<div style="left:299.8px;top:344.4px;width:4.4px;height:1px;background:#222;"></div>
<div style="left:289.8px;top:353px;width:5.4px;height:16px;background:#62e062;"></div>
<div style="left:269.8px;top:176.5px;width:1126px;height:411.1px;overflow:hidden;"><div class="k" style="left:80.2px;top:1.3px;height:16px;line-height:16px;"><span class="g">//<span class="c">输出结点的位置序号</span></span></div><div class="k" style="left:80.2px;top:17.3px;height:16px;line-height:16px;">cout&lt;&lt;setw(2)&lt;&lt;p&lt;&lt;<span class="r">"-&gt;"</span>;</div><div class="k" style="left:80.2px;top:33.3px;height:16px;line-height:16px;"><span class="g">//<span class="c">输出结点中每个元素的关键字，以此代替结点的值</span></span></div><div class="k" style="left:80.2px;top:49.3px;height:16px;line-height:16px;"><span class="b">for</span>(<span class="b">int</span> j=0; j&lt;km; j++)</div><div class="k" style="left:94.2px;top:65.3px;height:16px;line-height:16px;">cout&lt;&lt;pn.data[j].key&lt;&lt;<span class="r">"  "</span>;</div><div class="k" style="left:80.2px;top:81.3px;height:16px;line-height:16px;"><span class="g">//<span class="c">使</span>p<span class="c">指向下一个结点</span></span></div><div class="k" style="left:66.2px;top:97.3px;height:16px;line-height:16px;">p=pn.next;}</div><div class="k" style="left:73.2px;top:113.3px;height:16px;line-height:16px;">cout&lt;&lt;endl;}</div><div class="k" style="left:38.2px;top:129.3px;height:16px;line-height:16px;">}</div><div class="k" style="left:38.2px;top:145.3px;height:16px;line-height:16px;"><span class="g">//<span class="c">散列文件的类实现的测试</span></span></div><div class="k" style="left:38.2px;top:161.3px;height:16px;line-height:16px;"><span class="b">void</span> main()</div><div class="k" style="left:38.2px;top:177.3px;height:16px;line-height:16px;">{ cout&lt;&lt;<span class="r">"<span class="c">运行结果</span>:\n"</span>;</div><div class="k" style="left:52.2px;top:193.3px;height:16px;line-height:16px;"><span class="g">//<span class="c">定义保存记录的数组</span>a<span class="c">并初始化</span></span></div><div class="k" style="left:52.2px;top:209.3px;height:16px;line-height:16px;">ElemType a[15]={{13,<span class="r">"li"</span>},{18,<span class="r">"liu"</span>},{17,<span class="r">"wphp"</span>},{37,<span class="r">"menrm"</span>},</div><div class="k" style="left:52.2px;top:225.3px;height:16px;line-height:16px;">{8,<span class="r">"ytong"</span>},{22,<span class="r">"zhua"</span>},{24,<span class="r">"push"</span>},{48,<span class="r">"qian"</span>},{34,<span class="r">"tang"</span>},</div><div class="k" style="left:52.2px;top:241.3px;height:16px;line-height:16px;">{57,<span class="r">"shdm"</span>},{55,<span class="r">"kang"</span>},{30,<span class="r">"liuli"</span>},{25,<span class="r">"qiaoh"</span>},</div><div class="k" style="left:52.2px;top:257.3px;height:16px;line-height:16px;">{31,<span class="r">"dukun"</span>},{17,<span class="r">"haiang"</span>}};</div><div class="k" style="left:52.2px;top:273.3px;height:16px;line-height:16px;"><span class="g">//<span class="c">定义保存记录的数组</span>b<span class="c">并初始化</span></span></div><div class="k" style="left:52.2px;top:289.3px;height:16px;line-height:16px;">ElemType b[16]={{23,<span class="r">"tang"</span>},{38,<span class="r">"suan"</span>},{56,<span class="r">"kony"</span>},</div><div class="k" style="left:52.2px;top:305.3px;height:16px;line-height:16px;">{55,<span class="r">"shao"</span>},{80,<span class="r">"caik"</span>},{70,<span class="r">"ganwu"</span>},{65,<span class="r">"dukun"</span>},{42,<span class="r">"sini"</span>},</div><div class="k" style="left:52.2px;top:321.3px;height:16px;line-height:16px;">{29,<span class="r">"liuda"</span>},{43,<span class="r">"xitu"</span>},{71,<span class="r">"taoto"</span>},{77,<span class="r">"shouw"</span>},</div><div class="k" style="left:52.2px;top:337.3px;height:16px;line-height:16px;">{93,<span class="r">"shun"</span>},{69,<span class="r">"liyz"</span>},{45,<span class="r">"xuyang"</span>},{19,<span class="r">"wxy"</span>}};</div><div class="k" style="left:52.2px;top:353.3px;height:16px;line-height:16px;"><span class="g">//<span class="c">定义散列表文件和主文件的名字，并由字符指针</span>p1<span class="c">和</span>p2<span class="c">所指向</span></span></div><div class="k" style="left:52.2px;top:369.3px;height:16px;line-height:16px;"><span class="b">char</span> *p1=<span class="r">".\\HFile.idx"</span>, *p2=<span class="r">".\\HFile.dat"</span>;</div><div class="k" style="left:52.2px;top:385.3px;height:16px;line-height:16px;"><span class="g">//<span class="c">初始化散列表文件和主文件</span></span></div><div class="k" style="left:52.2px;top:401.3px;height:16px;line-height:16px;">HFile&lt;ElemType&gt; myfile(p1,p2);</div></div>
<div style="left:1396.2px;top:176.5px;width:16.6px;height:411.1px;background:linear-gradient(to right,#eeede5,#fbfbf8 40%,#fefefb);"></div><div style="left:1396.2px;top:176.5px;width:16.6px;height:17.5px;background:#dfe4ee;border:1px solid #b9c2d3;"></div><svg style="left:1399px;top:178.7px;" width="11" height="13" viewBox="0 0 11 13"><path d="M0.5 5L10.5 5M0.5 8L10.5 8" stroke="#111" stroke-width="1.6"/><path d="M5.5 0L8.2 3L2.8 3ZM5.5 13L8.2 10L2.8 10Z" fill="#111"/><path d="M5.5 2L5.5 11" stroke="#111" stroke-width="1.4"/></svg><div style="left:1397.2px;top:195px;width:15.6px;height:16px;background:linear-gradient(to right,#cbd8fb 0%,#bccdfa 60%,#aebff5 100%);border:1px solid #fff;border-radius:2px;box-shadow:0 0 0 .5px #9cb0e8 inset;"></div><svg style="left:1400.5px;top:198.5px;" width="9" height="9" viewBox="0 0 9 9"><path d="M1 5.5L4.5 2L8 5.5" fill="none" stroke="#4d6185" stroke-width="2"/></svg><div style="left:1397.2px;top:571.6px;width:15.6px;height:16px;background:linear-gradient(to right,#cbd8fb 0%,#bccdfa 60%,#aebff5 100%);border:1px solid #fff;border-radius:2px;box-shadow:0 0 0 .5px #9cb0e8 inset;"></div><svg style="left:1400.5px;top:575.1px;" width="9" height="9" viewBox="0 0 9 9"><path d="M1 2L4.5 5.5L8 2" fill="none" stroke="#4d6185" stroke-width="2"/></svg><div style="left:1397.2px;top:496px;width:15.6px;height:19.5px;background:linear-gradient(to right,#cbd8fb 0%,#bccdfa 60%,#aebff5 100%);border:1px solid #fff;border-radius:2px;box-shadow:0 0 0 .5px #9cb0e8 inset;"></div><div style="left:1401.2px;top:502.25px;width:7.6px;height:1px;background:#eef3fe;"></div><div style="left:1401.2px;top:504.25px;width:7.6px;height:1px;background:#eef3fe;"></div><div style="left:1401.2px;top:506.25px;width:7.6px;height:1px;background:#eef3fe;"></div><div style="left:1401.2px;top:508.25px;width:7.6px;height:1px;background:#eef3fe;"></div>
<div style="left:269.8px;top:587.6px;width:1143px;height:19px;background:linear-gradient(to bottom,#f3f2ea,#fcfcf9 50%,#fff);"></div>
<div style="left:269.8px;top:587.6px;width:61px;height:19px;background:#fff;"></div>
<div class="sans" style="left:275.5px;top:589.3px;height:16px;line-height:16px;">100 %</div>
<svg style="left:321px;top:596.4px;" width="6" height="3.2" viewBox="0 0 6 3.2"><path d="M0 0L6 0L3 3.2Z" fill="#1b2a45"/></svg>
<div style="left:329.5px;top:587.6px;width:1065.7px;height:19px;background:linear-gradient(to bottom,#eeede5,#fbfbf8 40%,#fefefb);"></div><div style="left:329.5px;top:588.6px;width:16.5px;height:17px;background:#ecebe4;border:1px solid #fdfdfb;border-radius:2px;box-shadow:0 0 0 .5px #d6d4c8 inset;"></div><svg style="left:333px;top:592.6px;" width="9" height="9" viewBox="0 0 9 9"><path d="M5.5 1L2 4.5L5.5 8" fill="none" stroke="#c2c1b8" stroke-width="2"/></svg><div style="left:1378.7px;top:588.6px;width:16.5px;height:17px;background:#ecebe4;border:1px solid #fdfdfb;border-radius:2px;box-shadow:0 0 0 .5px #d6d4c8 inset;"></div><svg style="left:1382.7px;top:592.6px;" width="9" height="9" viewBox="0 0 9 9"><path d="M2 1L5.5 4.5L2 8" fill="none" stroke="#c2c1b8" stroke-width="2"/></svg>
<div style="left:1396.2px;top:587.6px;width:16.6px;height:19px;background:#fff;"></div>
<div style="left:269.8px;top:606.1px;width:1143px;height:3.7px;background:linear-gradient(to bottom,#ffeeb8,#ffe08c);"></div>
<div style="left:269.8px;top:616.3px;width:1143px;height:18.6px;background:linear-gradient(to bottom,#4f648b 0%,#465a81 100%);border-radius:2.5px 2.5px 0 0;"></div>
<div class="u w" style="left:272.5px;top:619.2px;height:16px;line-height:16px;">Output</div>
<svg style="left:1369.2px;top:624px;" width="8" height="4" viewBox="0 0 8 4"><path d="M0 0L8 0L4 4Z" fill="#ced7e6"/></svg><svg style="left:1383.4px;top:619px;" width="10" height="13" viewBox="0 0 10 13"><path d="M3 1.5L7 1.5M3.5 1.5L3.5 7M6.5 1.5L6.5 7M1.5 7.2L8.5 7.2M5 7.5L5 12" stroke="#ced7e6" stroke-width="1.3" fill="none"/><path d="M5.9 2L5.9 7" stroke="#ced7e6" stroke-width="1"/></svg><svg style="left:1398.3px;top:620px;" width="11" height="11" viewBox="0 0 11 11"><path d="M1 1L10 10M10 1L1 10" stroke="#ced7e6" stroke-width="1.6"/></svg>
<div style="left:269.8px;top:634.9px;width:1143px;height:25.8px;background:#bcc7d8;"></div>
<div class="u" style="left:277.3px;top:641px;height:16px;line-height:16px;"><u>S</u>how output from:</div>
<div style="left:386px;top:638.6px;width:298px;height:18.8px;background:linear-gradient(to bottom,#fafbfd 0%,#eef1f7 50%,#e3e8f1 100%);border:1px solid #e4e9f2;border-radius:1.5px;box-shadow:0 0 0 .6px #a7b3c9;"></div>
<div class="u" style="left:389.5px;top:641.2px;height:16px;line-height:16px;">Build</div>
<svg style="left:675.6px;top:646.9px;" width="6" height="3.2" viewBox="0 0 6 3.2"><path d="M0 0L6 0L3 3.2Z" fill="#1b2a45"/></svg>
<div style="left:269.8px;top:660.7px;width:1143px;height:143.3px;background:#fff;overflow:hidden;"></div>
<div style="left:269.8px;top:660.7px;width:1120px;height:143.3px;overflow:hidden;"><div class="u" style="left:12px;top:-5.5px;height:16px;line-height:16px;">1&gt;  19.vcxproj -&gt; F:\19\.\Debug\19.exe</div><div class="u" style="left:12px;top:9.5px;height:16px;line-height:16px;">1&gt;FinalizeBuildStatus:</div><div class="u" style="left:12px;top:24.5px;height:16px;line-height:16px;">1&gt;  Deleting file ".\Debug\19.unsuccessfulbuild".</div><div class="u" style="left:12px;top:39.5px;height:16px;line-height:16px;">1&gt;  Touching ".\Debug\19.lastbuildstate".</div><div class="u" style="left:12px;top:54.5px;height:16px;line-height:16px;">1&gt;</div><div class="u" style="left:12px;top:69.5px;height:16px;line-height:16px;">1&gt;Build succeeded.</div><div class="u" style="left:12px;top:84.5px;height:16px;line-height:16px;">1&gt;</div><div class="u" style="left:12px;top:99.5px;height:16px;line-height:16px;">1&gt;Time Elapsed 00:00:00.70</div><div class="u" style="left:12px;top:114.5px;height:16px;line-height:16px;">========== Build: 1 succeeded, 0 failed, 0 up-to-date, 0 skipped ==========</div></div>
<div style="left:1396.2px;top:660.7px;width:16.6px;height:143.3px;background:linear-gradient(to right,#eeede5,#fbfbf8 40%,#fefefb);"></div><div style="left:1397.2px;top:660.7px;width:15.6px;height:16px;background:linear-gradient(to right,#cbd8fb 0%,#bccdfa 60%,#aebff5 100%);border:1px solid #fff;border-radius:2px;box-shadow:0 0 0 .5px #9cb0e8 inset;"></div><svg style="left:1400.5px;top:664.2px;" width="9" height="9" viewBox="0 0 9 9"><path d="M1 5.5L4.5 2L8 5.5" fill="none" stroke="#4d6185" stroke-width="2"/></svg><div style="left:1397.2px;top:788px;width:15.6px;height:16px;background:linear-gradient(to right,#cbd8fb 0%,#bccdfa 60%,#aebff5 100%);border:1px solid #fff;border-radius:2px;box-shadow:0 0 0 .5px #9cb0e8 inset;"></div><svg style="left:1400.5px;top:791.5px;" width="9" height="9" viewBox="0 0 9 9"><path d="M1 2L4.5 5.5L8 2" fill="none" stroke="#4d6185" stroke-width="2"/></svg><div style="left:1397.2px;top:748.7px;width:15.6px;height:19.7px;background:linear-gradient(to right,#cbd8fb 0%,#bccdfa 60%,#aebff5 100%);border:1px solid #fff;border-radius:2px;box-shadow:0 0 0 .5px #9cb0e8 inset;"></div><div style="left:1401.2px;top:755.05px;width:7.6px;height:1px;background:#eef3fe;"></div><div style="left:1401.2px;top:757.05px;width:7.6px;height:1px;background:#eef3fe;"></div><div style="left:1401.2px;top:759.05px;width:7.6px;height:1px;background:#eef3fe;"></div><div style="left:1401.2px;top:761.05px;width:7.6px;height:1px;background:#eef3fe;"></div>
<div style="left:269.8px;top:804px;width:1143px;height:17.5px;background:#fff;"></div>
<div style="left:269.8px;top:804px;width:1126.4px;height:17.5px;background:linear-gradient(to bottom,#eeede5,#fbfbf8 40%,#fefefb);"></div><div style="left:269.8px;top:805px;width:16.5px;height:15.5px;background:#ecebe4;border:1px solid #fdfdfb;border-radius:2px;box-shadow:0 0 0 .5px #d6d4c8 inset;"></div><svg style="left:273.3px;top:808.25px;" width="9" height="9" viewBox="0 0 9 9"><path d="M5.5 1L2 4.5L5.5 8" fill="none" stroke="#c2c1b8" stroke-width="2"/></svg><div style="left:1379.7px;top:805px;width:16.5px;height:15.5px;background:#ecebe4;border:1px solid #fdfdfb;border-radius:2px;box-shadow:0 0 0 .5px #d6d4c8 inset;"></div><svg style="left:1383.7px;top:808.25px;" width="9" height="9" viewBox="0 0 9 9"><path d="M2 1L5.5 4.5L2 8" fill="none" stroke="#c2c1b8" stroke-width="2"/></svg>
<svg style="left:698.1px;top:639.8px;" width="16" height="16" viewBox="0 0 16 16"><rect x="3.5" y="2.5" width="8" height="10" fill="#dfe3ea" stroke="#a6afc0"/><path d="M8 6L8 13M5.5 10.5L8 13.5L10.5 10.5" stroke="#a6afc0" stroke-width="1.4" fill="none"/></svg>
<svg style="left:727.5px;top:639.8px;" width="16" height="16" viewBox="0 0 16 16"><rect x="5.5" y="1.5" width="8" height="10" fill="#eef4e8" stroke="#5a7a4a"/><path d="M1 10L5.5 6L5.5 8.5L10 8.5L10 11.5L5.5 11.5L5.5 14Z" fill="#3f9a3a" stroke="#1f5a1f" stroke-width=".6"/></svg>
<svg style="left:749px;top:639.8px;" width="16" height="16" viewBox="0 0 16 16"><rect x="2.5" y="1.5" width="8" height="10" fill="#eef4e8" stroke="#5a7a4a"/><path d="M15 10L10.5 6L10.5 8.5L6 8.5L6 11.5L10.5 11.5L10.5 14Z" fill="#3f9a3a" stroke="#1f5a1f" stroke-width=".6"/></svg>
<svg style="left:778.8px;top:639.8px;" width="16" height="16" viewBox="0 0 16 16"><path d="M2 3.5L13 3.5M2 6L13 6M2 8.5L8 8.5M2 11L7 11" stroke="#6a7892" stroke-width="1.2"/><path d="M8 8L14.5 14.5M14.5 8L8 14.5" stroke="#e03818" stroke-width="2"/></svg>
<svg style="left:807.1px;top:639.8px;" width="16" height="16" viewBox="0 0 16 16"><rect x="1.5" y="2.5" width="13" height="10" fill="#fff" stroke="#3a4f78" stroke-width="1.2"/><rect x="1.5" y="2.5" width="13" height="2.5" fill="#3a4f78"/><path d="M5 10L11 10M11 10L11 7M11 10L9 8.2" stroke="#222" stroke-width="1.1" fill="none"/></svg>
<div style="left:691px;top:638.8px;width:1px;height:18px;background:#8d9bb5;"></div><div style="left:692px;top:638.8px;width:1px;height:18px;background:#d5dcea;"></div>
<div style="left:719.9px;top:638.8px;width:1px;height:18px;background:#8d9bb5;"></div><div style="left:720.9px;top:638.8px;width:1px;height:18px;background:#d5dcea;"></div>
<div style="left:770.7px;top:638.8px;width:1px;height:18px;background:#8d9bb5;"></div><div style="left:771.7px;top:638.8px;width:1px;height:18px;background:#d5dcea;"></div>
<div style="left:800.1px;top:638.8px;width:1px;height:18px;background:#8d9bb5;"></div><div style="left:801.1px;top:638.8px;width:1px;height:18px;background:#d5dcea;"></div>
<div style="left:433.3px;top:821.5px;width:63.7px;height:20px;background:#fff;border-radius:0 0 2px 2px;"></div>
<svg style="left:273.7px;top:824px;" width="16" height="16" viewBox="0 0 16 16"><rect x="1.5" y="2.5" width="12" height="11" fill="#fff" stroke="#4a6ab8"/><rect x="1.5" y="2.5" width="12" height="2.5" fill="#3a6ad8"/><path d="M3.5 7.5L9 7.5M3.5 10L7 10" stroke="#7f93b8"/><rect x="8" y="8" width="6.5" height="6.5" fill="#f0c040" stroke="#a87a10" stroke-width=".7"/></svg>
<div class="u w" style="left:294.5px;top:825.5px;height:16px;line-height:16px;">Code Definition Window</div>
<svg style="left:436.3px;top:824px;" width="16" height="16" viewBox="0 0 16 16"><rect x="1.5" y="2.5" width="13" height="11" fill="#fff" stroke="#4a6ab8"/><rect x="1.5" y="2.5" width="13" height="2.5" fill="#6a94e4"/><path d="M4 7.5L12 7.5M4 9.5L12 9.5M4 11.5L9 11.5" stroke="#7f93b8"/></svg>
<div class="u" style="left:457.5px;top:825.5px;height:16px;line-height:16px;">Output</div>
<svg style="left:502.7px;top:824px;" width="16" height="16" viewBox="0 0 16 16"><path d="M6 1L9.5 4.5L7 9L4 6Z" fill="#4a86e8" stroke="#dfe9fb" stroke-width=".8"/><path d="M9 4L12 3L15.5 7.5L11.5 9.5L10.5 7Z" fill="#f2c53c" stroke="#c8961a" stroke-width=".5"/><path d="M3.5 8L3.5 12M7.5 9L7.5 12" stroke="#555" stroke-width="2.6"/><circle cx="3.3" cy="12.8" r="2.3" fill="#3a3a3a" stroke="#999" stroke-width=".6"/><circle cx="8" cy="12.8" r="2.3" fill="#3a3a3a" stroke="#999" stroke-width=".6"/></svg>
<div class="u w" style="left:522.8px;top:825.5px;height:16px;line-height:16px;">Find Symbol Results</div>
<svg style="left:647px;top:824px;" width="16" height="16" viewBox="0 0 16 16"><rect x="2" y="3" width="10.5" height="12" fill="#e6d3a2" stroke="#9a7e3a"/><rect x="4.8" y="1.5" width="5" height="3" fill="#a0a0a0" stroke="#666" stroke-width=".8"/><rect x="3.8" y="5.5" width="7" height="8" fill="#fbfbfb"/><circle cx="11.5" cy="11.8" r="3.9" fill="#e8401c" stroke="#fff" stroke-width=".8"/><path d="M10 10.3L13 13.3M13 10.3L10 13.3" stroke="#fff" stroke-width="1.3"/></svg>
<div class="u w" style="left:666.5px;top:825.5px;height:16px;line-height:16px;">Error List</div>
<div style="left:1418.8px;top:131px;width:21.2px;height:112px;background:linear-gradient(to right,#425679,#3a4d70);border-radius:0 2px 2px 0;"></div>
<div style="left:1418.8px;top:247.8px;width:21.2px;height:65.4px;background:linear-gradient(to right,#425679,#3a4d70);border-radius:0 2px 2px 0;"></div>
<svg style="left:1422.5px;top:131.5px;" width="16" height="16" viewBox="0 0 16 16"><rect x="7" y="0.8" width="8" height="9" fill="#5f8fe4" stroke="#2a52b0"/><rect x="8.5" y="2.3" width="5" height="3.2" fill="#e3ecfa"/><rect x="1" y="4.8" width="8" height="9.5" fill="#dbe6f8" stroke="#5f80c0"/><rect x="2.5" y="6.3" width="5" height="3.2" fill="#4a80e0"/><rect x="10.5" y="10.5" width="3" height="3" fill="#48b048"/></svg>
<svg style="left:1422.5px;top:249px;" width="16" height="16" viewBox="0 0 16 16"><path d="M2.5 14L9.5 6.8" stroke="#d6402c" stroke-width="1.4" stroke-linecap="round"/><path d="M13.5 14L6.5 6.8" stroke="#c8503c" stroke-width="1.3" stroke-linecap="round"/><path d="M8.3 4.8L11.5 1.3L15.2 4.6L12.8 7.4Z" fill="#bcc4d0" stroke="#5f6b80" stroke-width=".8"/><path d="M1.2 3.2Q4 0.3 6.8 2.5L8 5.6L5.5 7.8L2.3 5.8Z" fill="#c9d0da" stroke="#5f6b80" stroke-width=".8"/></svg>
<div class="u w" style="left:1430.3px;top:153px;height:16px;line-height:16px;transform-origin:0 0;transform:rotate(90deg) translate(0,-8px);">Server Explorer</div>
<div class="u w" style="left:1430.3px;top:269.8px;height:16px;line-height:16px;transform-origin:0 0;transform:rotate(90deg) translate(0,-8px);">Toolbox</div>
<div class="u w" style="left:4.5px;top:852.2px;height:16px;line-height:16px;">Ready</div>
<div class="u w" style="left:1085.4px;top:852.2px;height:16px;line-height:16px;">Ln 352</div>
<div class="u w" style="left:1176.8px;top:852.2px;height:16px;line-height:16px;">Col 10</div>
<div class="u w" style="left:1270px;top:852.2px;height:16px;line-height:16px;">Ch 7</div>
<div class="u w" style="left:1406px;top:852.2px;height:16px;line-height:16px;">INS</div>
</div></body></html>
